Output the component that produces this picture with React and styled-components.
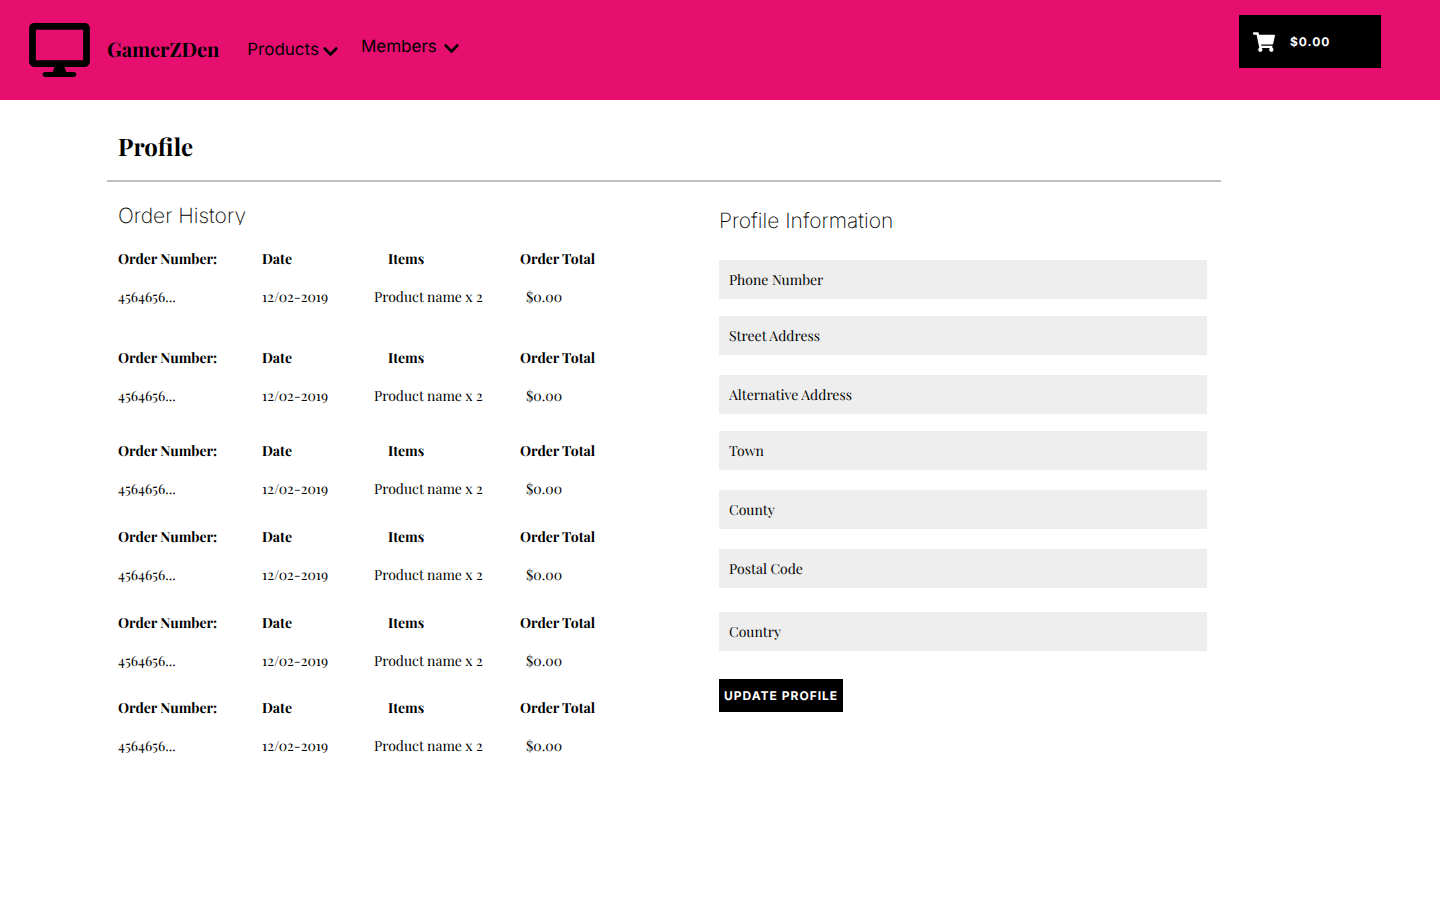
import React from "react";
import styled, { createGlobalStyle } from "styled-components";
import { FaChevronDown, FaDesktop, FaShoppingCart } from "react-icons/fa";

const serif = `"Playfair Display", "Liberation Serif", serif`;
const sans = `Inter, "Liberation Sans", sans-serif`;

const GlobalStyle = createGlobalStyle`
  *, *::before, *::after { box-sizing: border-box; }
  body {
    margin: 0;
    background: #fff;
    color: #000;
    font-family: ${serif};
    font-size: 14px;
    text-rendering: geometricPrecision;
  }
  h1, h2 { margin: 0; }
  button, input { font: inherit; border: 0; border-radius: 0; text-rendering: inherit; }
  button { cursor: pointer; }
`;

const Header = styled.header`
  display: flex;
  align-items: flex-start;
  justify-content: space-between;
  height: 100px;
  padding: 0 59px 0 29px;
  background: #e60f70;
`;

const HeaderGroup = styled.div`
  display: flex;
  align-items: center;
  height: 100px;
`;

const Brand = styled.a`
  display: flex;
  align-items: center;
  gap: 17px;
  color: inherit;
  text-decoration: none;
  font-size: 20px;
  font-weight: 700;
  line-height: 26px;
`;

const BrandIcon = styled(FaDesktop)`
  width: 61px;
  height: 54px;
`;

const Nav = styled.nav`
  display: flex;
  align-items: center;
  gap: 23px;
  margin-left: 28px;
`;

const NavButton = styled.button`
  display: flex;
  align-items: center;
  gap: ${({ $gap }) => $gap}px;
  padding: 0 0 ${({ $lift }) => $lift}px;
  background: none;
  color: inherit;
  font-family: ${sans};
  font-size: 17px;
  line-height: 24px;
`;

const Chevron = styled(FaChevronDown)`
  width: 15px;
  height: 17px;
  margin-top: 2px;
`;

const CartButton = styled.button`
  display: flex;
  align-items: center;
  gap: 15px;
  width: 142px;
  height: 53px;
  margin-top: 15px;
  padding: 0 14px;
  background: #000;
  color: #fff;
  font-family: ${sans};
  font-size: 12px;
  font-weight: 700;
  letter-spacing: 1px;
`;

const CartIcon = styled(FaShoppingCart)`
  width: 22px;
  height: 20px;
`;

const Main = styled.main`
  padding: 0 219px 48px 107px;
`;

const PageTitle = styled.h1`
  padding: 31px 11px 17px;
  border-bottom: 2px solid #bfbfbf;
  font-size: 24px;
  line-height: 32px;
`;

const Columns = styled.div`
  display: grid;
  grid-template-columns: minmax(0, 601fr) minmax(0, 488fr);
  padding: 0 14px 0 11px;
`;

const Section = styled.section`
  padding-top: ${({ $top }) => $top}px;
`;

const SectionTitle = styled.h2`
  height: ${({ $height }) => $height}px;
  overflow: hidden;
  font-family: ${sans};
  font-size: 21px;
  font-weight: 200;
  line-height: 24px;
`;

const OrderList = styled.div`
  padding-top: 15px;
`;

const OrderTable = styled.table`
  width: 484px;
  max-width: 100%;
  margin-bottom: ${({ $space }) => $space}px;
  border-collapse: collapse;
  table-layout: fixed;
  line-height: 20px;
  text-align: left;
`;

const Heading = styled.th`
  width: ${({ $width }) => $width};
  height: 38px;
  padding: 0 0 0 ${({ $indent }) => $indent || 0}px;
  white-space: nowrap;
`;

const Cell = styled.td`
  height: 38px;
  padding: 0 0 0 ${({ $indent }) => $indent || 0}px;
  white-space: nowrap;
`;

const Form = styled.form`
  padding-top: 26px;
`;

const Field = styled.input`
  display: block;
  width: 100%;
  height: 39px;
  margin-bottom: ${({ $space }) => $space}px;
  padding: 0 10px;
  background: #eee;
  color: #000;
  &::placeholder {
    color: #000;
    opacity: 1;
  }
`;

const SubmitButton = styled.button`
  height: 33px;
  padding: 0 5px;
  background: #000;
  color: #fff;
  font-family: ${sans};
  font-size: 12px;
  font-weight: 700;
  letter-spacing: 1px;
  white-space: nowrap;
`;

const orders = [23, 17, 10, 10, 9, 10].map((space, id) => ({
  id,
  space,
  number: "4564656...",
  date: "12/02-2019",
  items: "Product name x 2",
  total: "$0.00",
}));

const fields = [
  { label: "Phone Number", type: "tel", space: 17 },
  { label: "Street Address", type: "text", space: 20 },
  { label: "Alternative Address", type: "text", space: 17 },
  { label: "Town", type: "text", space: 20 },
  { label: "County", type: "text", space: 20 },
  { label: "Postal Code", type: "text", space: 24 },
  { label: "Country", type: "text", space: 28 },
];

function Order({ order }) {
  return (
    <OrderTable $space={order.space}>
      <thead>
        <tr>
          <Heading scope="col" $width="144px">Order Number:</Heading>
          <Heading scope="col" $width="112px">Date</Heading>
          <Heading scope="col" $width="146px" $indent={14}>Items</Heading>
          <Heading scope="col">Order Total</Heading>
        </tr>
      </thead>
      <tbody>
        <tr>
          <Cell>{order.number}</Cell>
          <Cell>{order.date}</Cell>
          <Cell>{order.items}</Cell>
          <Cell $indent={6}>{order.total}</Cell>
        </tr>
      </tbody>
    </OrderTable>
  );
}

export default function App() {
  return (
    <>
      <GlobalStyle />
      <Header>
        <HeaderGroup>
          <Brand href="#">
            <BrandIcon aria-hidden="true" />
            GamerZDen
          </Brand>
          <Nav>
            <NavButton type="button" $gap={4} $lift={0}>
              Products
              <Chevron aria-hidden="true" />
            </NavButton>
            <NavButton type="button" $gap={7} $lift={6}>
              Members
              <Chevron aria-hidden="true" />
            </NavButton>
          </Nav>
        </HeaderGroup>
        <CartButton type="button">
          <CartIcon aria-hidden="true" />
          $0.00
        </CartButton>
      </Header>
      <Main>
        <PageTitle>Profile</PageTitle>
        <Columns>
          <Section $top={23}>
            <SectionTitle $height={20}>Order History</SectionTitle>
            <OrderList>
              {orders.map((order) => (
                <Order key={order.id} order={order} />
              ))}
            </OrderList>
          </Section>
          <Section $top={28}>
            <SectionTitle $height={24}>Profile Information</SectionTitle>
            <Form onSubmit={(event) => event.preventDefault()}>
              {fields.map(({ label, type, space }) => (
                <Field key={label} type={type} placeholder={label} aria-label={label} $space={space} />
              ))}
              <SubmitButton type="submit">UPDATE PROFILE</SubmitButton>
            </Form>
          </Section>
        </Columns>
      </Main>
    </>
  );
}
